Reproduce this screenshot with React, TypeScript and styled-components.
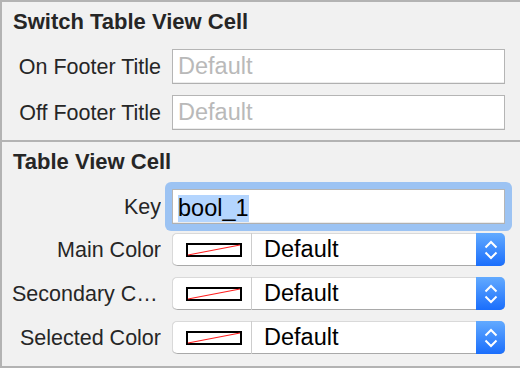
import React from "react";
import styled, { createGlobalStyle } from "styled-components";

const GlobalStyle = createGlobalStyle`
  html, body {
    margin: 0;
    padding: 0;
  }
  body {
    background: #f1f1f1;
    font-family: "Liberation Sans", Arial, sans-serif;
  }
`;

const Panel = styled.div`
  width: 520px;
  height: 368px;
  box-sizing: border-box;
  display: flex;
  flex-direction: column;
  background: #f1f1f1;
  border-top: 2px solid #b3b3b3;
  border-bottom: 2px solid #b3b3b3;
  border-left: 2px solid #b3b3b3;
  overflow: hidden;
`;

const Section = styled.section<{ $divider?: boolean }>`
  padding: 6px 0 10px;
  border-top: ${(p) => (p.$divider ? "2px solid #b3b3b3" : "none")};
`;

const Heading = styled.h2`
  margin: 0;
  padding-left: 11px;
  font-size: 22px;
  line-height: 27px;
  font-weight: 700;
  color: #262626;
`;

const Rows = styled.div<{ $gap: number }>`
  display: flex;
  flex-direction: column;
  gap: ${(p) => p.$gap}px;
  margin-top: 14px;
`;

const Row = styled.div<{ $padBottom?: number }>`
  display: grid;
  grid-template-columns: 149px 1fr;
  column-gap: 11px;
  align-items: center;
  padding: 0 15px ${(p) => p.$padBottom || 0}px 10px;
`;

const Label = styled.label`
  font-size: 21.5px;
  line-height: 27px;
  padding-top: 1px;
  color: #262626;
  text-align: right;
  white-space: nowrap;
  overflow: hidden;
  text-overflow: ellipsis;
`;

const TextField = styled.div`
  height: 35px;
  box-sizing: border-box;
  display: flex;
  align-items: center;
  padding-left: 5px;
  background: #fff;
  border: 1px solid #b5b5b5;
  border-bottom-color: #b0b0b0;
  box-shadow: inset 0 -1px 0 #ececec;
  font-size: 23.5px;
  color: #000;
`;

const Placeholder = styled.span`
  color: #b9b9b9;
`;

const FocusRing = styled.div`
  margin: -7px;
  padding: 7px;
  border-radius: 6px;
  background: #9cc3f3;
`;

const Selection = styled.span`
  display: inline-block;
  height: 27px;
  line-height: 27px;
  margin-top: 3px;
  background: #b4d5fe;
`;

const PopupGroup = styled.div`
  height: 33px;
  box-sizing: border-box;
  display: flex;
  background: #fff;
  border-radius: 5px;
  overflow: hidden;
  box-shadow: inset 0 1px 0 #d9d9d9, inset 1px 0 0 #d9d9d9, inset 0 -1px 0 #a9a9a9;
`;

const ColorWell = styled.div`
  width: 80px;
  flex: none;
  display: flex;
  align-items: center;
  padding-left: 14px;
  box-sizing: border-box;
  border-right: 1px solid #cdcdcd;
`;

const PopupValue = styled.div`
  flex: 1;
  display: flex;
  align-items: center;
  padding-left: 12px;
  font-size: 23.5px;
  color: #000;
`;

const Stepper = styled.div`
  width: 29px;
  flex: none;
  display: flex;
  align-items: center;
  justify-content: center;
  background: linear-gradient(to bottom, #62aaff, #1a6efc);
`;

const Swatch = () => (
  <svg width="56" height="14" viewBox="0 0 56 14">
    <rect x="1" y="1" width="54" height="12" fill="#fff" stroke="#000" strokeWidth="2" />
    <line x1="2" y1="12" x2="54" y2="2" stroke="#ff2020" strokeWidth="1.2" />
  </svg>
);

const Chevrons = () => (
  <svg width="14" height="20" viewBox="0 0 14 20">
    <polyline points="1.5,7.5 7,2 12.5,7.5" fill="none" stroke="#fff" strokeWidth="2" />
    <polyline points="1.5,12.5 7,18 12.5,12.5" fill="none" stroke="#fff" strokeWidth="2" />
  </svg>
);

const ColorPopup: React.FC = () => (
  <PopupGroup>
    <ColorWell>
      <Swatch />
    </ColorWell>
    <PopupValue>Default</PopupValue>
    <Stepper>
      <Chevrons />
    </Stepper>
  </PopupGroup>
);

const colorRows = ["Main Color", "Secondary Color", "Selected Color"];

const App: React.FC = () => {
  return (
    <>
      <GlobalStyle />
      <Panel>
        <Section>
          <Heading>Switch Table View Cell</Heading>
          <Rows $gap={11}>
            <Row>
              <Label>On Footer Title</Label>
              <TextField>
                <Placeholder>Default</Placeholder>
              </TextField>
            </Row>
            <Row>
              <Label>Off Footer Title</Label>
              <TextField>
                <Placeholder>Default</Placeholder>
              </TextField>
            </Row>
          </Rows>
        </Section>

        <Section $divider>
          <Heading>Table View Cell</Heading>
          <Rows $gap={9}>
            <Row>
              <Label>Key</Label>
              <FocusRing>
                <TextField>
                  <Selection>bool_1</Selection>
                </TextField>
              </FocusRing>
            </Row>
            {colorRows.map((name) => (
              <Row key={name} $padBottom={2}>
                <Label title={name}>{name}</Label>
                <ColorPopup />
              </Row>
            ))}
          </Rows>
        </Section>
      </Panel>
    </>
  );
};

export default App;
